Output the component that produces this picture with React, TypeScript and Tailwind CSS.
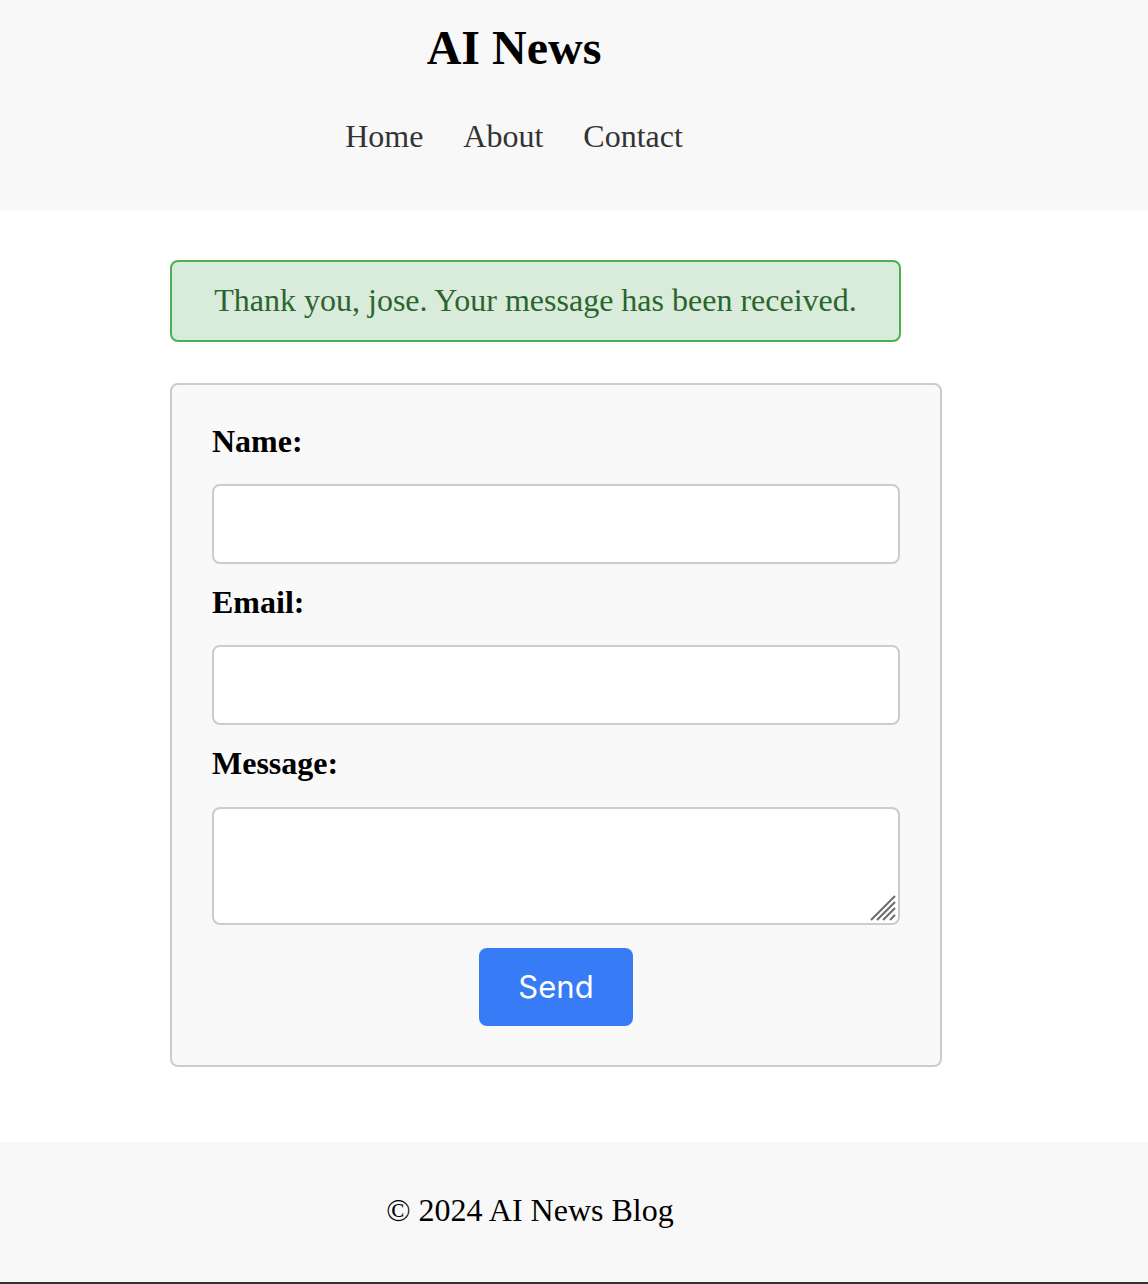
import React from "react";

export default function App() {
  const serif = "font-['Liberation_Serif','Times_New_Roman',serif]";
  return (
    <div className={`min-h-[1284px] bg-white ${serif} flex flex-col`}>
      <header className="h-[211px] bg-[#f8f8f8] pt-[20px]">
        <div className="w-[1028px] text-center">
          <h1 className="text-[48px] leading-[55px] font-bold text-black">AI News</h1>
          <nav className="mt-[43px] flex justify-center gap-[40px] text-[32px] leading-[37px] text-[#333]">
            <a href="#">Home</a>
            <a href="#">About</a>
            <a href="#">Contact</a>
          </nav>
        </div>
      </header>

      <main className="pl-[170px] pt-[49px]">
        <div className="w-[731px] h-[82px] rounded-[8px] border-2 border-[#4caf50] bg-[#d9ecdb] pt-[19px] text-center text-[32px] leading-[38px] text-[#2b652d]">
          Thank you, jose. Your message has been received.
        </div>

        <form
          className="mt-[41px] w-[772px] rounded-[8px] border-2 border-[#cccccc] bg-[#f9f9f9] px-[40px] pt-[38px] pb-[39px] flex flex-col"
          onSubmit={(e) => e.preventDefault()}
        >
          <label className="block text-[32px] leading-[37px] font-bold text-black">Name:</label>
          <input
            type="text"
            className="mt-[24px] h-[80px] w-full rounded-[8px] border-2 border-[#cccccc] bg-white"
          />
          <label className="mt-[20px] block text-[32px] leading-[37px] font-bold text-black">Email:</label>
          <input
            type="email"
            className="mt-[24px] h-[80px] w-full rounded-[8px] border-2 border-[#cccccc] bg-white"
          />
          <label className="mt-[20px] block text-[32px] leading-[37px] font-bold text-black">Message:</label>
          <div className="relative mt-[25px] h-[118px] w-full">
            <textarea className="block h-full w-full resize-none rounded-[8px] border-2 border-[#cccccc] bg-white" />
            <svg
              className="pointer-events-none absolute right-[4px] bottom-[4px]"
              width="26"
              height="26"
              viewBox="0 0 26 26"
            >
              <line x1="1" y1="25" x2="25" y2="1" stroke="#6b6b6b" strokeWidth="2" />
              <line x1="7" y1="25" x2="25" y2="7" stroke="#6b6b6b" strokeWidth="2" />
              <line x1="13" y1="25" x2="25" y2="13" stroke="#6b6b6b" strokeWidth="2" />
              <line x1="20" y1="25" x2="25" y2="20" stroke="#6b6b6b" strokeWidth="2" />
            </svg>
          </div>
          <div className="mt-[23px] flex justify-center">
            <button
              type="submit"
              className="h-[78px] w-[154px] rounded-[8px] bg-[#377bf6] font-['Inter',sans-serif] text-[31px] text-white"
            >
              Send
            </button>
          </div>
        </form>
      </main>

      <footer className="mt-[75px] h-[140px] bg-[#f8f8f8] pt-[50px]">
        <p className="w-[1060px] text-center text-[32px] leading-[37px] text-black">© 2024 AI News Blog</p>
      </footer>
      <div className="h-[2px] bg-[#333]" />
    </div>
  );
}
